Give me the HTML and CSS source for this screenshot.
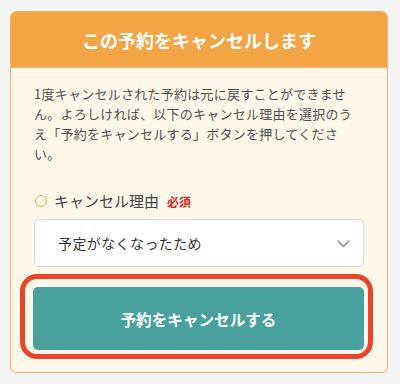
FILE: index.html
```html
<!DOCTYPE html>
<html lang="ja">
<head>
<meta charset="utf-8">
<link rel="stylesheet" href="styles.css">
</head>
<body>
<div class="card">
  <div class="card-head">この予約をキャンセルします</div>
  <div class="card-body">
    <p class="note">1度キャンセルされた予約は元に戻すことができません。よろしければ、以下のキャンセル理由を選択のうえ「予約をキャンセルする」ボタンを押してください。</p>
    <div class="label"><span class="ring"></span><span class="label-text">キャンセル理由</span><span class="req">必須</span></div>
    <div class="select">
      <span class="select-text">予定がなくなったため</span>
      <svg class="chev" width="13" height="8" viewBox="0 0 13 8"><path d="M1.2 1.2 L6.5 6.5 L11.8 1.2" fill="none" stroke="#a0a0a0" stroke-width="1.9" stroke-linecap="round" stroke-linejoin="round"/></svg>
    </div>
    <div class="btn-wrap">
      <div class="btn">予約をキャンセルする</div>
    </div>
  </div>
</div>
</body>
</html>
```
FILE: styles.css
```css
html, body {
  margin: 0;
  padding: 0;
  background: #f5f5f5;
}
body {
  font-family: "Noto Sans CJK JP", "Noto Sans", sans-serif;
  color: #4a4a4a;
}
.card {
  margin: 11px 0 0 10px;
  width: 378px;
  height: 362px;
  box-sizing: border-box;
  border: 1px solid #f3b170;
  border-radius: 6px;
  background: #fef8ea;
  overflow: hidden;
  display: flex;
  flex-direction: column;
}
.card-head {
  height: 56px;
  background: #f3a444;
  color: #ffffff;
  font-size: 18px;
  font-weight: 700;
  display: flex;
  align-items: center;
  justify-content: center;
  border-bottom: 1px solid #f3b170;
  box-sizing: border-box;
}
.card-body {
  padding: 16px 23px 0 23px;
}
.note {
  margin: 0;
  width: 320px;
  font-size: 13px;
  line-height: 20px;
  letter-spacing: 0.25px;
  color: #505050;
}
.label {
  margin-top: 26px;
  height: 22px;
  display: flex;
  align-items: center;
}
.ring {
  width: 12px;
  height: 12px;
  box-sizing: border-box;
  border: 1.5px solid #f3a040;
  border-radius: 50%;
  margin-left: 1px;
  margin-right: 7px;
}
.label-text {
  font-size: 15px;
  line-height: 22px;
  color: #444444;
}
.req {
  margin-left: 8px;
  font-size: 12px;
  font-weight: 700;
  color: #d02a1e;
}
.select {
  margin-top: 7px;
  height: 48px;
  box-sizing: border-box;
  border: 1px solid #dcdcdc;
  border-radius: 4px;
  background: #ffffff;
  display: flex;
  align-items: center;
  justify-content: space-between;
  padding: 0 13px 0 23px;
}
.select-text {
  font-size: 14px;
  letter-spacing: 0.4px;
  color: #333333;
}
.chev {
  display: block;
  margin-top: 1px;
}
.btn-wrap {
  margin-top: 20px;
  position: relative;
}
.btn-wrap::after {
  content: "";
  position: absolute;
  top: -13px;
  bottom: -9px;
  left: -14px;
  right: -9px;
  border: 5px solid #e8452a;
  border-radius: 17px;
  pointer-events: none;
}
.btn {
  height: 63px;
  margin-left: -1px;
  border-radius: 5px;
  background: #48a19d;
  color: #ffffff;
  font-size: 15.6px;
  font-weight: 700;
  display: flex;
  align-items: center;
  justify-content: center;
}
```
